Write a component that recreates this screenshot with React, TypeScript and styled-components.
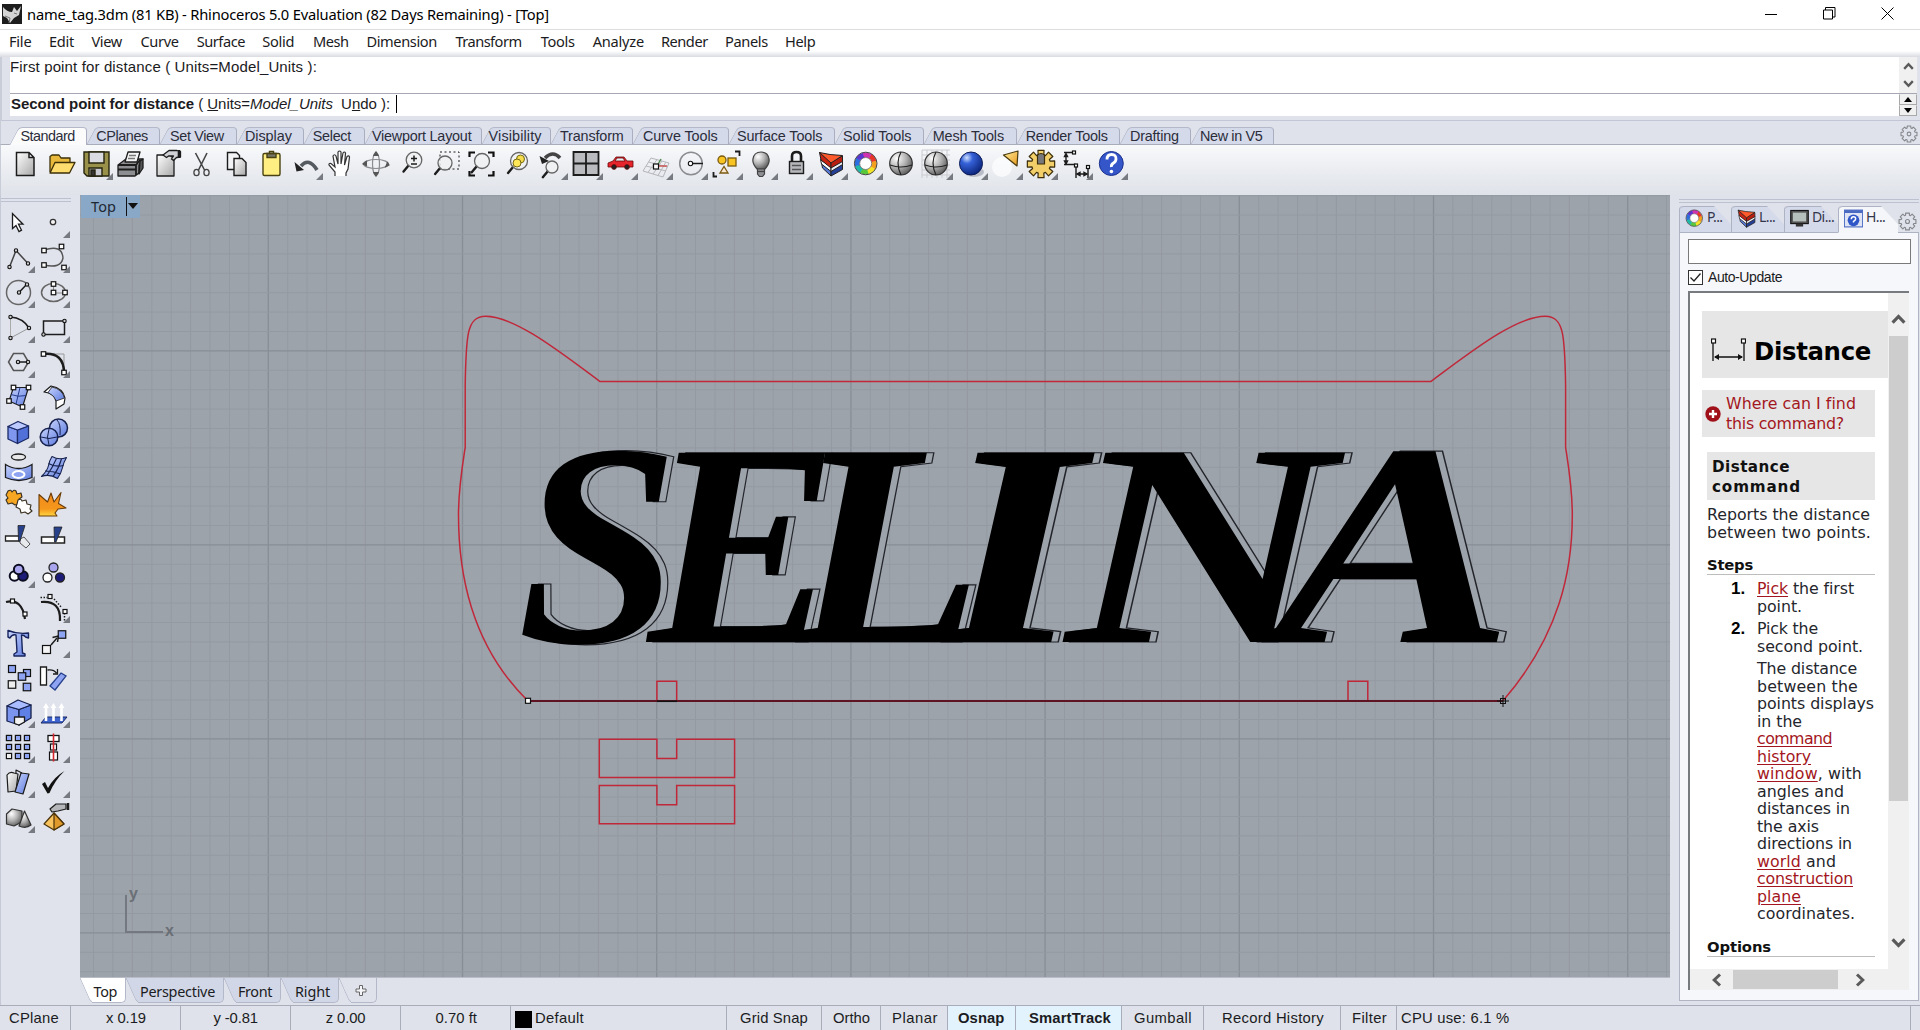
import React, { ReactNode, useLayoutEffect, useRef, useState } from "react";
import styled, { createGlobalStyle, css } from "styled-components";

const SANS = '"Liberation Sans", Arial, sans-serif';
const UI = '"Noto Sans", "Open Sans", sans-serif';
const DOC = '"DejaVu Sans", Verdana, sans-serif';

const Global = createGlobalStyle`
  * { box-sizing: border-box; }
  body { margin: 0; background: #dfe2ea; overflow: hidden; }
`;

/* ---------- text that is tracked to a fixed measure ---------- */

const Tracked = styled.span`
  display: inline-block;
  white-space: pre;
`;

function Fit({ w, children }: { w: number; children: ReactNode }) {
  const ref = useRef<HTMLSpanElement>(null);
  const [spacing, setSpacing] = useState(0);
  useLayoutEffect(() => {
    const el = ref.current;
    if (!el) return;
    const count = (el.textContent || "").length;
    setSpacing((w - el.getBoundingClientRect().width) / count);
  }, [w]);
  return (
    <Tracked ref={ref} style={{ letterSpacing: `${spacing}px` }}>
      {children}
    </Tracked>
  );
}

/* ---------- frame ---------- */

const Window = styled.div`
  display: flex;
  flex-direction: column;
  width: 1920px;
  height: 1030px;
  background: #dfe2ea;
  color: #1b1b22;
  font-family: ${SANS};
  overflow: hidden;
`;

const TitleBar = styled.header`
  display: flex;
  align-items: center;
  flex: none;
  height: 29px;
  padding: 0 3px 2px 2px;
  background: #fff;
  color: #000;
  font: 14.7px ${UI};
`;

const AppIcon = styled.svg`
  width: 20px;
  height: 20px;
  margin-right: 5px;
`;

const Caption = styled.div`
  display: flex;
  margin-left: auto;
`;

const CaptionButton = styled.div`
  display: grid;
  place-items: center;
  width: 58.5px;
  height: 26px;
`;

const MenuBar = styled.nav`
  display: flex;
  flex: none;
  height: 28px;
  border-top: 1px solid #dcdde0;
  background: linear-gradient(#fff 21px, #d9dbe1 27px);
  font: 14.6px/22px ${UI};
`;

const MenuItem = styled.span<{ $before: number }>`
  margin-left: ${(p) => p.$before}px;
`;

const CommandArea = styled.section`
  display: flex;
  flex: none;
  height: 64px;
  padding: 0 3px 4px 8px;
  border-left: 2px solid #c9cdd8;
  border-bottom: 1px solid #c2c6d6;
  background: #dfe2ea;
`;

const CommandText = styled.div`
  flex: 1;
  background: #fff;
  font-size: 15px;
`;

const History = styled.div`
  height: 37px;
  padding-top: 1px;
  border-bottom: 1px solid #a6a8b4;
  line-height: 18px;
`;

const Prompt = styled.div`
  display: flex;
  align-items: center;
  height: 19px;
  padding-left: 1px;
`;

const Caret = styled.i`
  width: 1px;
  height: 18px;
  margin-left: 6px;
  background: #000;
`;

const CommandScroll = styled.div`
  display: flex;
  flex-direction: column;
  width: 18px;
  background: #f0f0f0;
`;

const ScrollArrows = styled.div`
  display: flex;
  flex-direction: column;
  align-items: center;
  justify-content: space-around;
  height: 37px;
  padding: 1px 0;
  border-bottom: 1px solid #a6a8b4;
`;

const SpinButton = styled.div`
  display: grid;
  place-items: center;
  height: 11px;
  border: 1px solid #a9a9a9;
  border-top-color: #eee;
`;

const TabStrip = styled.div`
  display: flex;
  align-items: flex-end;
  flex: none;
  height: 24px;
  padding-left: 9px;
  border-bottom: 1px solid #a9acb9;
  border-left: 1px solid #c9cdd8;
  background: #dfe2ea;
`;

const ToolTab = styled.div<{ $w: number; $pad: number; $on?: boolean }>`
  position: relative;
  z-index: 0;
  flex: none;
  width: ${(p) => p.$w}px;
  height: ${(p) => (p.$on ? 18 : 17)}px;
  margin-bottom: ${(p) => (p.$on ? -1 : 0)}px;
  padding-left: ${(p) => p.$pad}px;
  font-size: 14.4px;
  line-height: 19px;
  color: #2b2d3a;
  &::before,
  &::after {
    content: "";
    position: absolute;
    z-index: -1;
    top: 0;
    bottom: 0;
    background: ${(p) => (p.$on ? "#fbfbfc" : "#d5daea")};
    border-top: 1px solid #b4b9ca;
  }
  &::before {
    left: 4px;
    width: 20px;
    border-left: 1px solid #b4b9ca;
    border-radius: 4px 0 0 0;
    transform: skewX(-28deg);
  }
  &::after {
    left: 14px;
    right: 0;
    border-right: 1px solid #a9aec0;
    border-radius: 0 4px 0 0;
  }
`;

const StripGear = styled.div`
  margin: 0 2px 0 auto;
  height: 19px;
`;

const ToolBar = styled.div`
  display: flex;
  flex: none;
  height: 50px;
  padding: 2px 0 0 7px;
  border-left: 1px solid #c9cdd8;
  background: linear-gradient(#f8f9fb, #eceef2 45%, #dfe2e9);
`;

const Cell = styled.div<{ $more?: boolean }>`
  position: relative;
  width: 35px;
  height: 35px;
  & > svg {
    display: block;
    width: 35px;
    height: 35px;
    overflow: visible;
  }
  ${(p) =>
    p.$more &&
    css`
      &::after {
        content: "";
        position: absolute;
        right: 0;
        bottom: 2px;
        border-style: solid;
        border-width: 0 0 7px 7px;
        border-color: transparent transparent #777a80 transparent;
      }
    `}
`;

const Main = styled.main`
  display: flex;
  flex: 1;
  min-height: 0;
`;

const SideTools = styled.aside`
  flex: none;
  width: 80px;
  padding-top: 3px;
  border-left: 1px solid #c6cad6;
  background: #e0e3ec;
`;

const Grip = styled.div<{ $w?: number }>`
  flex: none;
  width: ${(p) => (p.$w ? `${p.$w}px` : "auto")};
  height: 4px;
  border: solid #bcc1cf;
  border-width: 1px 0;
`;

const SideGrid = styled.div`
  display: grid;
  grid-template-columns: 35px 35px;
  grid-auto-rows: 35px;
  margin: 3px 0 0 -1px;
`;

const Center = styled.div`
  flex: none;
  width: 1590px;
`;

const Canvas = styled.div`
  position: relative;
  height: 783px;
  background: #9da3ab;
  border-bottom: 1px solid #b9bcc6;
  & > svg {
    display: block;
  }
`;

const ViewTitle = styled.div`
  position: absolute;
  display: flex;
  align-items: center;
  top: 0;
  left: 1px;
  width: 59px;
  height: 23px;
  padding: 0 0 1px 10px;
  background: #89a7c6;
  color: #1d2733;
  font: 14.5px ${UI};
`;

const ViewDivider = styled.i`
  width: 1px;
  height: 19px;
  margin: 0 1px 0 10px;
  background: #111;
`;

const ViewTabs = styled.div`
  display: flex;
  height: 27px;
  padding-bottom: 1px;
`;

const ViewTab = styled.div<{ $w: number; $pad: number; $on?: boolean; $bare?: boolean }>`
  position: relative;
  z-index: 0;
  width: ${(p) => p.$w}px;
  height: 25px;
  padding-left: ${(p) => p.$pad}px;
  font: 14.4px/27px ${UI};
  &::before,
  &::after {
    content: "";
    position: absolute;
    z-index: -1;
    top: 0;
    bottom: 0;
    background: ${(p) => (p.$on ? "#fff" : p.$bare ? "#dfe2ea" : "#d2d7e8")};
    border-bottom: 1px solid #b4b9ca;
  }
  &::before {
    left: 5px;
    width: 16px;
    border-left: 1px solid #b4b9ca;
    border-radius: 0 0 0 5px;
    transform: skewX(24deg);
  }
  &::after {
    left: 12px;
    right: 0;
    border-right: 1px solid #b4b9ca;
    border-radius: 0 0 5px 0;
  }
`;

/* ---------- help panel ---------- */

const Dock = styled.aside`
  display: flex;
  flex-direction: column;
  flex: 1;
  min-width: 0;
  padding: 4px 1px 4px 9px;
`;

const DockTabs = styled.div`
  display: flex;
  flex: none;
  height: 30px;
  padding-top: 3px;
`;

const DockTab = styled.div<{ $w: number; $on?: boolean }>`
  position: relative;
  z-index: 0;
  display: flex;
  gap: 3px;
  flex: none;
  width: ${(p) => p.$w}px;
  height: 27px;
  padding: 0 0 0 5px;
  font: 14px/22px ${UI};
  letter-spacing: -0.6px;
  color: #33364a;
  border-left: 1px solid #aeb3c4;
  border-bottom: 1px solid ${(p) => (p.$on ? "#f5f6fa" : "#aeb3c4")};
  border-radius: 4px 0 0 0;
  &::before {
    content: "";
    position: absolute;
    z-index: -1;
    inset: 0;
    background: ${(p) => (p.$on ? "#f5f6fa" : "#d5daea")};
    border-top: 1px solid #aeb3c4;
    border-radius: 4px 0 0 0;
    clip-path: polygon(0 0, calc(100% - 17px) 0, 100% 70%, 100% 100%, 0 100%);
  }
  & > svg {
    flex: none;
    margin-top: 3px;
  }
`;

const DockGear = styled.div`
  flex: 1;
  padding: 6px 0 0 0;
  border-bottom: 1px solid #aeb3c4;
`;

const DockBody = styled.div`
  display: flex;
  flex-direction: column;
  flex: 1;
  min-height: 0;
  padding: 6px 7px 10px 8px;
  border: 1px solid #b0b4c3;
  border-top: 0;
  background: #f6f7fa;
`;

const SearchBox = styled.div`
  flex: none;
  height: 25px;
  border: 1px solid #7a7a7a;
  background: #fff;
`;

const CheckRow = styled.div`
  display: flex;
  align-items: center;
  flex: none;
  gap: 5px;
  height: 16px;
  margin: 5px 0 6px;
  font-size: 14px;
`;

const CheckBox = styled.span`
  display: grid;
  place-items: center;
  width: 15px;
  height: 15px;
  border: 1px solid #333;
  background: #fff;
`;

const Browser = styled.div`
  display: grid;
  grid-template: 1fr 21px / 1fr 21px;
  flex: 1;
  min-height: 0;
  margin-right: 2px;
  border: solid #777b80;
  border-width: 2px 0 0 2px;
  background: #f0f0f0;
`;

const Doc = styled.article`
  overflow: hidden;
  padding: 18px 0 0 12px;
  background: #fff;
  color: #24262c;
  font: 15.8px/17.5px ${DOC};
`;

const DocTitle = styled.h1`
  display: flex;
  align-items: flex-end;
  height: 67px;
  margin: 0 0 12px;
  padding: 0 0 9px 9px;
  background: #e6e6e6;
  color: #000;
  font: bold 24.4px/34px ${DOC};
  & > svg {
    margin: 0 8px 7px 0;
  }
`;

const WhereBox = styled.div`
  display: flex;
  align-items: center;
  gap: 5px;
  width: 173px;
  height: 47px;
  margin-bottom: 15px;
  padding-left: 3px;
  background: #e6e6e6;
  color: #a31621;
  line-height: 20px;
`;

const CommandBox = styled.h2`
  width: 168px;
  height: 48px;
  margin: 0 0 6px 5px;
  padding: 5px 0 0 5px;
  background: #e6e6e6;
  color: #111;
  font: bold 15.2px/20px ${DOC};
`;

const Para = styled.p`
  margin: 0 0 0 5px;
`;

const Heading = styled.h3`
  width: 168px;
  height: 20px;
  margin: 14px 0 5px 5px;
  border-bottom: 1px solid #bdbdbd;
  color: #111;
  font: bold 14.8px/19px ${DOC};
`;

const Step = styled.div`
  display: flex;
  margin-bottom: 5px;
`;

const StepNo = styled.b`
  width: 26px;
  margin-left: 29px;
  color: #000;
  font: bold 17px/17px ${SANS};
`;

const StepNote = styled.div`
  margin: 0 0 14px 55px;
`;

const Link = styled.span`
  color: #a31621;
  text-decoration: underline;
  text-underline-offset: 2px;
`;

const VScroll = styled.div`
  display: flex;
  flex-direction: column;
  align-items: center;
  padding-top: 19px;
`;

const VThumb = styled.div`
  width: 19px;
  height: 465px;
  margin: 9px 0 134px;
  background: #cdcdcd;
`;

const HScroll = styled.div`
  display: flex;
  align-items: center;
  padding-left: 20px;
`;

const HThumb = styled.div`
  width: 105px;
  height: 19px;
  margin: 0 15px 0 9px;
  background: #cdcdcd;
`;

/* ---------- status bar ---------- */

const StatusBar = styled.footer`
  display: flex;
  flex: none;
  height: 25px;
  border-top: 1px solid #a9acb9;
  font-size: 14.8px;
  line-height: 25px;
`;

const Pane = styled.div<{ $w: number; $pad: number; $on?: boolean }>`
  display: flex;
  flex: none;
  width: ${(p) => p.$w}px;
  padding-left: ${(p) => p.$pad}px;
  border-right: 1px solid #a9acb9;
  ${(p) => p.$on && "background: #e3f3fd; font-weight: bold;"}
`;

const Swatch = styled.i`
  width: 17px;
  height: 17px;
  margin: 5px 3px 0 0;
  background: #000;
`;

/* ---------- icons ---------- */

const K = "#1c1c1c";
const B = "#8ea4f2";

const Sq = ({ x, y, s = 4.5, f = "#fff" }: { x: number; y: number; s?: number; f?: string }) => (
  <rect x={x - s / 2} y={y - s / 2} width={s} height={s} fill={f} stroke="#111" strokeWidth="1.2" />
);

const Dot = ({ x, y, r = 1.7, f = "#ccc" }: { x: number; y: number; r?: number; f?: string }) => (
  <circle cx={x} cy={y} r={r} fill={f} stroke="#111" strokeWidth="1.1" />
);

/* Outline of an eight-toothed cog. */
const cog = (cx: number, cy: number, outer: number, inner: number) => {
  const pts: string[] = [];
  for (let i = 0; i < 8; i++) {
    [
      [-0.3, inner],
      [-0.22, outer],
      [0.22, outer],
      [0.3, inner],
    ].forEach(([da, r]) => {
      const a = (i * Math.PI) / 4 + da;
      pts.push(`${(cx + r * Math.cos(a)).toFixed(2)} ${(cy + r * Math.sin(a)).toFixed(2)}`);
    });
  }
  return `M${pts.join("L")}Z`;
};

const Gear = ({ size = 22 }: { size?: number }) => (
  <svg width={size} height={size} viewBox="0 0 22 22" fill="none" stroke="#85878c" strokeWidth="1.3">
    <path d={cog(11, 11, 10, 7.6)} strokeLinejoin="round" />
    <circle cx="11" cy="11" r="2.3" />
  </svg>
);

const Chevron = ({ dir, size = 14 }: { dir: 0 | 90 | 180 | 270; size?: number }) => (
  <svg width={size} height={size} viewBox="0 0 14 14">
    <path d="M1.5 10 7 4.2 12.5 10" transform={`rotate(${dir} 7 7)`} fill="none" stroke="#5a5a5a" strokeWidth="3" />
  </svg>
);

const Lens = ({ x = 21, y = 14, r = 7.5 }: { x?: number; y?: number; r?: number }) => (
  <g>
    <path d={`M${x - r * 0.7} ${y + r * 0.7} l-5 6`} stroke={K} strokeWidth="2.4" strokeLinecap="round" />
    <circle cx={x} cy={y} r={r} fill="#f0f1f3" fillOpacity=".8" stroke="#666" strokeWidth="1.3" />
  </g>
);

const WheelGlyph = () => (
  <g fill="none" strokeWidth="5">
    {["#e8362c", "#f2a01e", "#f4e428", "#58c83a", "#20b8a8", "#2d6fe0", "#5b35d0", "#d033b0"].map((c, i) => {
      const a = ((i * 45 - 60) * Math.PI) / 180;
      const b = ((i * 45 - 12) * Math.PI) / 180;
      return (
        <path
          key={c}
          stroke={c}
          d={`M${17.7 + 8.5 * Math.cos(a)} ${16.5 + 8.5 * Math.sin(a)}A8.5 8.5 0 0 1 ${17.7 + 8.5 * Math.cos(b)} ${16.5 + 8.5 * Math.sin(b)}`}
        />
      );
    })}
    <circle cx="17.7" cy="16.5" r="11.3" stroke="#444" strokeWidth="1" />
    <circle cx="17.7" cy="16.5" r="6" stroke="#666" strokeWidth=".8" fill="#fff" />
  </g>
);

const LayersGlyph = () => (
  <g stroke="#222" strokeWidth="1" strokeLinejoin="round">
    <path d="M8.500 16 18 23.500V29L9.500 21z" fill="#5878d8" />
    <path d="M18 23.500 29.500 17v5.500L18 29z" fill="#243f96" />
    <path d="M7.500 12.500 18 20v4.500L8.500 17z" fill="#fff" />
    <path d="M18 20 29.500 13.500v4L18 24.500z" fill="#eceef4" />
    <path d="M6.500 5.500 18 15v6L8 13z" fill="#c92413" />
    <path d="M18 15 29.500 9v5.500L18 21z" fill="#b81e10" />
    <path d="M6.500 5.500 17 7.500 29.500 8.500 18 16z" fill="#ff5a2c" />
  </g>
);

const Sphere = ({ fill }: { fill: string }) => (
  <g>
    <ellipse cx="18" cy="16.5" rx="11.3" ry="11.5" fill={fill} stroke="#333" strokeWidth="1.2" />
    <path d="M7 18q11 4 22 0M18 5q-6 11 0 23" fill="none" stroke="#222" strokeWidth="1.2" />
  </g>
);

const Gradients = styled.svg`
  position: absolute;
  width: 0;
  height: 0;
`;

const Defs = () => (
  <Gradients>
    <defs>
      <radialGradient id="gGrey" cx=".32" cy=".28" r=".8">
        <stop offset="0" stopColor="#fff" />
        <stop offset=".5" stopColor="#b4b4b4" />
        <stop offset="1" stopColor="#555" />
      </radialGradient>
      <radialGradient id="gBlue" cx=".32" cy=".25" r=".85">
        <stop offset="0" stopColor="#cfe0ff" />
        <stop offset=".3" stopColor="#3562d8" />
        <stop offset="1" stopColor="#071d70" />
      </radialGradient>
      <linearGradient id="gPale" x1="0" y1="0" x2="1" y2="1">
        <stop offset="0" stopColor="#c7d3fc" />
        <stop offset="1" stopColor="#5e7ce0" />
      </linearGradient>
      <linearGradient id="gSilver" x1="0" y1="0" x2="1" y2="1">
        <stop offset="0" stopColor="#fff" />
        <stop offset="1" stopColor="#a8a8a8" />
      </linearGradient>
      <linearGradient id="gGold" x1="0" y1="0" x2="1" y2="1">
        <stop offset="0" stopColor="#fff0a0" />
        <stop offset="1" stopColor="#e8961a" />
      </linearGradient>
      <linearGradient id="gFlame" x1="0" y1="0" x2="0" y2="1">
        <stop offset="0" stopColor="#f08a1c" />
        <stop offset=".7" stopColor="#f5971c" />
        <stop offset="1" stopColor="#ffd640" />
      </linearGradient>
    </defs>
  </Gradients>
);

type IconDef = [ReactNode, boolean?];

const topIcons: IconDef[] = [
  [<path d="M8.5 5.5H21l5 5v18H8.5zM21 5.5v5h5" fill="url(#gSilver)" stroke={K} strokeWidth="1.5" />],
  [
    <g stroke="#3c3008" strokeWidth="1.3" strokeLinejoin="round">
      <path d="M7 25V9.5L9 8h7l2 3h9v5" fill="#e9b93c" />
      <path d="M7 26 12 15.5h20L26.5 26z" fill="#ffdc6e" />
    </g>,
  ],
  [
    <g stroke="#26240e" strokeWidth="1.4">
      <path d="M6 5h25v24H9l-3-3z" fill="#99904a" />
      <path d="M11 5h15v11H11z" fill="#d9dbe0" />
      <path d="M11 21h13v8H11z" fill="#c9cbd0" />
      <path d="M13 23h4v6h-4z" fill="#333" />
    </g>,
    true,
  ],
  [
    <g stroke={K} strokeWidth="1.3" strokeLinejoin="round">
      <path d="M5 18 13 12h17l-4 6v8L22 29H5z" fill="#8c8e92" />
      <path d="M12 15 15 5h12l-3 10z" fill="#f4f4f6" />
      <path d="M5 18h18l4-5M23 18v10M5 22.5h18" fill="none" strokeWidth="1.8" />
      <path d="M16 8.5h7M15 11.5h7" stroke="#777" />
      <path d="M27 14l3-2v9l-4 6z" fill="#555" />
    </g>,
  ],
  [
    <g stroke={K} strokeWidth="1.3" strokeLinejoin="round">
      <path d="M9 8h13l4 4v17H9z" fill="url(#gSilver)" />
      <path d="M15 8 21 3.5h8l3.5 1V10l-4 .5-3 3-2-1.5 2-3h-5l-2 1.5z" fill="#cfd1d4" />
      <path d="M31 3v8" strokeWidth="2.6" />
    </g>,
  ],
  [
    <g fill="none" stroke="#444" strokeWidth="1.3">
      <path d="M12.500 6 21.500 23M24 6 15.500 23" strokeWidth="1.600" />
      <ellipse cx="13.500" cy="25.500" rx="2.600" ry="3.200" />
      <ellipse cx="23.500" cy="25.500" rx="2.600" ry="3.200" />
    </g>,
  ],
  [
    <g fill="#f3f4f6" stroke={K} strokeWidth="1.4">
      <path d="M9.5 5.5h9l3 3v14h-12z" />
      <path d="M16 11.5h8l4 4v13H16z" fill="url(#gSilver)" />
    </g>,
  ],
  [
    <g stroke="#4a4210" strokeWidth="1.4">
      <rect x="10" y="6.5" width="17" height="22" rx="1.5" fill="#ffee82" />
      <path d="M14 6.5h9v4h-9z" fill="#77766a" />
      <path d="M16.5 4.5h4v2h-4z" fill="#bbb" />
    </g>,
  ],
  [
    <g>
      <path d="M13 19q8-9 16 4" fill="none" stroke="#555a60" strokeWidth="3.6" />
      <path d="M6.5 15l2 9.5L16 23z" fill="#222" />
    </g>,
    true,
  ],
  [
    <path
      d="M12 29v-4L6 18q-.5-2 2-1.5l4 3.5-2-11q1.5-2.500 3 0l2 8V5q1.500-2 3 0v12l2-11q1.500-2 2.500 0l-1 12 2.500-8.500q2-1.500 2.500.5L25 22l-2 4v3"
      fill="#fff"
      stroke="#333"
      strokeWidth="1.200"
    />,
  ],
  [
    <g fill="none" stroke="#8a8c90" strokeWidth="1.200">
      <ellipse cx="18" cy="17" rx="12.500" ry="4.500" />
      <ellipse cx="18" cy="17" rx="3.500" ry="11.500" />
      <path d="M15.500 9l2.500-4 2.500 4M27 20l4-2-2-3M15.500 25l2.500 4 2.500-4M9 14l-4 3 4 2" fill="#555" stroke="#555" />
    </g>,
  ],
  [
    <g>
      <Lens x={21} y={13} r={7.8} />
      <path d="M18 11.5h6M21 8.5v6M18 17h6" stroke={K} strokeWidth="1.5" />
    </g>,
  ],
  [
    <g>
      <rect x="12" y="5" width="19" height="17" fill="none" stroke={K} strokeDasharray="2 2.5" />
      <Lens x={17} y={16} r={7} />
    </g>,
  ],
  [
    <g>
      <path d="M6.5 10V5.5H12M25 5.5h5.5V10M30.5 24v4.5H25M12 28.5H6.5V24" fill="none" stroke="#111" strokeWidth="2.2" />
      <Lens x={19} y={14} r={7.5} />
    </g>,
  ],
  [
    <g>
      <Lens x={21} y={14} r={8.5} />
      <circle cx="22.5" cy="12" r="4" fill="#f5dc4c" stroke="#776a10" />
      <circle cx="19" cy="16" r="4" fill="#ffe75a" stroke="#776a10" />
    </g>,
  ],
  [
    <g>
      <path d="M12 11q8-8 15 0" fill="none" stroke="#444" strokeWidth="3.5" />
      <path d="M6.5 9l2.5 8 7-3z" fill="#222" />
      <Lens x={19} y={20} r={6} />
    </g>,
    true,
  ],
  [<path d="M5.5 5h25v23h-25zM18 5v23M5.5 16.5h25" fill="#b9bbbf" stroke={K} strokeWidth="1.8" />, true],
  [
    <g stroke="#6a0a0a" strokeWidth=".8">
      <path d="M5 20v-4l5-2 3-4h8l3 4h6v6z" fill="#e5242c" />
      <path d="M12 14l2-3h6l2 3z" fill="#e9eef5" />
      <circle cx="11" cy="20" r="2.4" fill="#222" />
      <circle cx="24" cy="20" r="2.4" fill="#222" />
    </g>,
    true,
  ],
  [
    <g fill="none" stroke="#b4b6ba" strokeWidth="1">
      <path d="M5 24 13 11l18 5-6 14zM8 19l20 5M10.500 15l19 5M10 25.500 19 12.500M15 27l9-13M20 28.500l8-13.500" />
      <path d="M18 19h11" stroke="#c55" strokeWidth="1.500" />
      <path d="M19 19l4-7" stroke="#585" strokeWidth="1.500" />
      <Sq x={18} y={19.5} s={5} />
    </g>,
    true,
  ],
  [
    <g>
      <circle cx="18" cy="16.5" r="11.3" fill="none" stroke="#8a8c90" strokeWidth="1.5" />
      <path d="M18 16.5h12" stroke={K} strokeWidth="1.5" />
      <Dot x={17.5} y={16.5} r={2.2} f="#fff" />
    </g>,
    true,
  ],
  [
    <g stroke="#7a5a10" strokeWidth="1.3">
      <path d="M27 4.5h4.5V9M9 29.5H5.5V25" fill="none" stroke={K} strokeWidth="1.8" />
      <circle cx="14" cy="13" r="4" fill="#f7c422" />
      <rect x="20" y="11" width="8" height="8" fill="#f7c422" />
      <path d="M12 26l4-6.5 4 6.5z" fill="#fbe6cf" />
    </g>,
    true,
  ],
  [
    <g stroke="#444" strokeWidth="1.2">
      <path d="M14 22q-5-6-4-10 1-7 8-7t8 7q1 4-4 10z" fill="url(#gGrey)" />
      <path d="M14.5 22h7v5l-2 2.5h-3l-2-2.5z" fill="#8d8f93" />
      <path d="M14.5 24.5h7" />
    </g>,
    true,
  ],
  [
    <g stroke={K} strokeWidth="1.4">
      <path d="M14 15V9q0-4 4.5-4T23 9v6" fill="none" strokeWidth="2.6" />
      <rect x="11.5" y="14.5" width="14" height="12" fill="#b5b7bb" />
      <path d="M14 18.5h9M14 22.5h9" stroke="#555" />
    </g>,
    true,
  ],
  [<LayersGlyph />, true],
  [<WheelGlyph />, true],
  [<Sphere fill="url(#gGrey)" />],
  [
    <g>
      <path d="M4 3v28M9 3v28M14 3v28M19 3v28M24 3v28M29 3v28M4 3h28M4 8h28M4 13h28M4 18h28M4 23h28M4 28h28" stroke="#c9cbd0" strokeWidth="1" />
      <Sphere fill="url(#gGrey)" />
    </g>,
    true,
  ],
  [
    <g>
      <ellipse cx="21" cy="25" rx="10" ry="5" fill="#b9bcc6" />
      <circle cx="18" cy="16.5" r="11.5" fill="url(#gBlue)" stroke="#0d1c58" />
    </g>,
    true,
  ],
  [
    <g>
      <circle cx="14" cy="20" r="10" fill="#fff" opacity=".7" />
      <path d="M15.5 8 30 4l-1 15z" fill="url(#gGold)" stroke="#4a3a10" strokeWidth="1.2" strokeLinejoin="round" />
    </g>,
    true,
  ],
  [
    <g stroke="#3c2e08" strokeWidth="1.2" strokeLinejoin="round">
      <path d={cog(18, 17, 14, 9.5)} fill="#f3cf6a" />
      <path d="M14.5 8q3.5-3 7 0v9h-7z" fill="#77787b" />
    </g>,
    true,
  ],
  [
    <g fill="none" stroke={K} strokeWidth="1.4">
      <path d="M6 5.5h10M6 17.5h12M8 7.5v9M18 20v11M30 20v11M20 27h8" />
      <path d="M6.5 9.5 8 6.5l1.5 3zM6.5 14l1.5 3 1.5-3zM22 25.5 19 27l3 1.5zM26 25.5l3 1.5-3 1.5z" fill={K} />
      <Sq x={16} y={5.5} s={3} />
      <Sq x={18} y={18.5} s={3} />
      <Sq x={30} y={20} s={3} />
    </g>,
    true,
  ],
  [
    <g>
      <circle cx="18.3" cy="16.5" r="12" fill="#3456c8" stroke="#1d3390" />
      <path d="M14 12.5q0-5 4.6-5t4.400 4.500q0 2.500-2.500 4t-2.100 4" fill="none" stroke="#fff" strokeWidth="2.8" />
      <circle cx="18.4" cy="24.5" r="1.8" fill="#fff" />
    </g>,
    true,
  ],
];

const sideIcons: IconDef[] = [
  [<path d="M12.5 8.5v15l3.5-3 3 6 2.5-1.300-3-6h4.500z" fill="#fff" stroke={K} strokeWidth="1.3" />],
  [<circle cx="18" cy="17" r="2.7" fill="#f4f4f4" stroke="#333" strokeWidth="1.3" />, true],
  [
    <g fill="none" stroke="#444" strokeWidth="1.5">
      <path d="M9.5 27 16 10.5 28 23.5" />
      <Dot x={9.5} y={27} />
      <Dot x={16} y={10.5} />
      <Dot x={28} y={23.5} />
    </g>,
    true,
  ],
  [
    <g>
      <path d="M9 10q18-6 19 8-2 11-19 7" fill="none" stroke="#555" strokeWidth="1.4" />
      <Sq x={9} y={10.5} />
      <Sq x={26.5} y={6.5} />
      <Sq x={9} y={25} />
      <Sq x={29} y={27.5} />
    </g>,
    true,
  ],
  [
    <g>
      <circle cx="18.5" cy="17.5" r="12" fill="none" stroke="#666" strokeWidth="1.5" />
      <path d="M19 17.5 27 9" stroke={K} strokeWidth="1.5" />
      <Dot x={19} y={17.5} />
      <Dot x={27} y={9.5} />
    </g>,
    true,
  ],
  [
    <g>
      <ellipse cx="18.5" cy="17.5" rx="12" ry="9" fill="none" stroke="#666" strokeWidth="1.5" />
      <path d="M18.5 9v9H30" fill="none" stroke="#888" />
      <Sq x={18.5} y={9} />
      <Sq x={18.5} y={17.5} />
      <Sq x={30} y={17.5} />
    </g>,
    true,
  ],
  [
    <g>
      <path d="M10.5 28V7" fill="none" stroke="#aaa" />
      <path d="M10.5 28 29 18" stroke="#999" />
      <path d="M10.5 7Q23 8 29 18" fill="none" stroke={K} strokeWidth="1.7" />
      <Dot x={10.5} y={7} />
      <Dot x={29} y={18} />
      <Dot x={10.5} y={28} />
    </g>,
    true,
  ],
  [
    <g>
      <rect x="8.5" y="11" width="21" height="13.5" fill="none" stroke={K} strokeWidth="1.5" />
      <Dot x={29.5} y={11} />
      <Dot x={8.5} y={24.5} />
    </g>,
    true,
  ],
  [
    <g>
      <path d="M13.5 8.5h10L28.5 17l-5 8.5h-10L8.5 17z" fill="none" stroke="#555" strokeWidth="1.5" />
      <path d="M18 17h10" stroke={K} strokeWidth="1.5" />
      <Dot x={18} y={17} />
      <Dot x={28} y={17} />
    </g>,
    true,
  ],
  [
    <g>
      <path d="M8.5 9h20.5v19" fill="none" stroke="#999" />
      <path d="M8.5 9Q29 7 29 28" fill="none" stroke={K} strokeWidth="2.5" />
      <Sq x={8.5} y={9} />
      <Sq x={29} y={27.5} />
    </g>,
    true,
  ],
  [
    <g>
      <path d="M13.5 7.5h15L22.5 27 9 21z" fill="url(#gPale)" stroke={K} strokeWidth="1.2" />
      <path d="M20 7.5 16 24M11 14.5q7 3 15 1" fill="none" stroke="#223a8c" />
      <Sq x={13.5} y={7.5} />
      <Sq x={28.5} y={7.5} />
      <Sq x={22.5} y={27} />
      <Sq x={9} y={21} />
    </g>,
    true,
  ],
  [
    <g stroke={K} strokeWidth="1.2" strokeLinejoin="round">
      <path d="M9 12 16 6q12 2 14 12l-1 6-8 5V21q-1-8-12-9z" fill="#fff" />
      <path d="M17 7q10 2 12.5 11L21 21q-1-5-8-8.500z" fill="url(#gPale)" strokeWidth=".8" />
    </g>,
    true,
  ],
  [
    <g stroke="#1b2a66" strokeWidth="1.3" strokeLinejoin="round">
      <path d="M8 11.5 17.5 15v13.5L8 24z" fill="#7f97ee" />
      <path d="M17.5 15 28.5 11v12l-11 5.500z" fill="#5271d8" />
      <path d="M8 11.5 18 6.5 28.5 11l-11 4z" fill="#bccaff" />
    </g>,
    true,
  ],
  [
    <g stroke="#15204c" strokeWidth="1.5" fill="url(#gPale)">
      <circle cx="23.5" cy="13" r="9" />
      <circle cx="14" cy="22" r="8.8" />
      <path d="M6 22q8 3 16 0M14 14q-3 8 0 16M22 5q4 4 3 15" fill="none" strokeWidth="1" />
    </g>,
    true,
  ],
  [
    <g stroke={K} strokeWidth="1.3">
      <ellipse cx="18.5" cy="7" rx="7" ry="3" fill="#e8e8ea" />
      <path d="M5.5 14.5q13 8 26.5 0v13q-13 6-26.500 0z" fill="url(#gPale)" />
      <ellipse cx="18.5" cy="24.5" rx="6" ry="3.5" fill="#8ea4f2" stroke="#fff" strokeWidth="2" />
    </g>,
    true,
  ],
  [
    <g stroke="#15204c" strokeWidth="1.1" strokeLinejoin="round">
      <path d="M17 6.500q7 4 14.500 1-3 5-4 10t-5 11q-8-5-16-2 6-6 7-11t3.500-9z" fill="url(#gPale)" />
      <path d="M13.500 13.500q7 4 15 2M10 21q8 0 15.500 3M21.500 8.500q-4 9-9.500 17M26.500 9q-3 10-8.500 17.500" fill="none" />
    </g>,
    true,
  ],
  [
    <g stroke="#3a3020" strokeWidth="1.1" strokeLinejoin="round">
      <path d="M8 6q3-2 4 1 2-3 4-1l1 3 4-1 1 4-3 2 1 4-5 2-3-2-4 1-2-4 2-2-2-3z" fill="#f5a623" />
      <path d="M18 15q3-2 4 1l4-1 1 4 4 1-1 4 2 2-4 3-3-2-4 1-1-4-4-2 1-3z" fill="#fff" />
    </g>,
  ],
  [
    <path d="M4 9.500 12.500 17 16 8l3 9L26 7.500 23.500 18.500 31 23l-8 1-3 4 2 3H4z" fill="url(#gFlame)" stroke="#6a3c08" strokeWidth="1.1" strokeLinejoin="round" />,
  ],
  [
    <g stroke="#222" strokeWidth="1.3">
      <path d="M5.5 16h14v5h-14z" fill="#fff" />
      <path d="M20 19l4-2 6 7-4 4-6-5z" fill="#e8e9ec" strokeWidth="1" stroke="#555" />
      <path d="M18 5.5h7L20 21h-1.500z" fill="#26408c" strokeWidth=".8" />
    </g>,
  ],
  [
    <g stroke="#222" strokeWidth="1.5">
      <path d="M6.5 17h23v6h-23z" fill="#fff" />
      <path d="M19 7h8l-6 15h-1.500z" fill="#26408c" strokeWidth=".8" />
    </g>,
  ],
  [
    <g stroke="#0c0c20" strokeWidth="2">
      <circle cx="14.5" cy="21" r="4.8" fill="#fff" />
      <circle cx="23" cy="21" r="4.8" fill="#1c1c78" />
      <circle cx="18.7" cy="14.5" r="4.8" fill="#a8a4ee" />
    </g>,
    true,
  ],
  [
    <g stroke="#222" strokeWidth="1.3">
      <circle cx="18.5" cy="12.5" r="4.5" fill="#a8a4ee" />
      <circle cx="12.5" cy="22.5" r="4.5" fill="#fff" />
      <circle cx="25" cy="22.5" r="4.5" fill="#1c1c78" />
    </g>,
  ],
  [
    <g>
      <path d="M6 12q16-4 19 17" fill="none" stroke={K} strokeWidth="2.2" />
      <Sq x={12.5} y={11} s={4} />
      <Sq x={25} y={24} s={4} />
    </g>,
  ],
  [
    <g>
      <path d="M5.5 7.5h7M19 9l8 9M29.5 23v8" stroke={K} strokeWidth="1.5" strokeDasharray="1.5 1.5" />
      <path d="M6 12q20-2 19 19" fill="none" stroke={K} strokeWidth="2.2" />
      <Sq x={15} y={6.5} s={4} />
      <Sq x={30} y={21.5} s={4} />
    </g>,
    true,
  ],
  [
    <path d="M8 5.5q10 4 20.5 2.500v5l-3-1q-1-2-4-2l1 18 2.500 1v2h-11v-2l3-2-1-17q-4-1-6 3l-2-1z" fill="url(#gPale)" stroke="#17245c" strokeWidth="1.4" strokeLinejoin="round" />,
  ],
  [
    <g>
      <path d="M16 20l6-7" stroke={K} strokeWidth="1.5" />
      <path d="M17.5 12.5 23.5 11l-1 6" fill="none" stroke={K} strokeWidth="1.5" />
      <Sq x={11.5} y={24.5} s={8} f="#f4f4f6" />
      <Sq x={27} y={9.5} s={7.5} f={B} />
    </g>,
    true,
  ],
  [
    <g>
      <Sq x={12} y={9} s={7} f={B} />
      <Sq x={27} y={13} s={7} f={B} />
      <Sq x={22} y={16.5} s={7.5} f={B} />
      <Sq x={12} y={24.5} s={7.5} f="#eee" />
      <Sq x={27} y={27} s={7.5} f={B} />
    </g>,
  ],
  [
    <g stroke={K} strokeWidth="1.3">
      <path d="M5.5 7h6v18h-6z" fill="#fff" />
      <path d="M12.5 10q6-1 9 3M18 14l4.5 0 0-5" fill="none" />
      <path d="M26 13l5 3-11 14-5-4z" fill={B} stroke="#26408c" />
    </g>,
  ],
  [
    <g stroke="#15204c" strokeWidth="1.3" strokeLinejoin="round">
      <path d="M7 11 19 14.500V30L7 26z" fill="#7b95ee" />
      <path d="M19 14.500 31 10v13L19 30z" fill="#5f80e4" />
      <path d="M7 11 18 5 31 10 19 14.500z" fill="#a9bcff" />
      <path d="M14.500 22h10v5l-5.500 3-4.500-1.500z" fill="#f2f2f4" stroke={K} />
    </g>,
    true,
  ],
  [
    <g>
      <path d="M6 28 11 22h21l-5 6z" fill="#3f63cc" stroke="#1b2a66" />
      <path d="M11 26V12M18.5 26V12M26.5 26V12" stroke="#fff" strokeWidth="2.6" />
      <path d="M8 13l3-5 3 5zM15.5 13l3-5 3 5zM23.5 13l3-5 3 5z" fill="#fff" />
    </g>,
    true,
  ],
  [
    <g>
      {[8, 17, 26].map((y) => [9, 18, 27].map((x) => <Sq key={`${x}-${y}`} x={x} y={y} s={5.2} f={x === 9 && y === 26 ? "#eee" : B} />))}
    </g>,
    true,
  ],
  [
    <g>
      <Sq x={18.5} y={26} s={8} />
      <rect x="13" y="5.5" width="11" height="6" fill="#fff" stroke="#111" strokeWidth="1.3" />
      <Sq x={18.5} y={17} s={6} />
      <path d="M18.5 3.5v28" stroke="#d4242c" strokeWidth="1.6" />
    </g>,
    true,
  ],
  [
    <g stroke={K} strokeWidth="1.2" strokeLinejoin="round">
      <path d="M7 10q3-4 7-2l4 1-2 17-8 1z" fill="url(#gSilver)" />
      <path d="M21 8l8 1-6 20-8-2z" fill="url(#gPale)" />
      <path d="M16 8V5l6 3" fill="none" />
    </g>,
    true,
  ],
  [<path d="M7 19l3-2 3 6Q19 12 29.5 6 20 15 14.5 28l-2 .5z" fill="#111" />, true],
  [
    <g stroke="#333" strokeWidth="1.2" strokeLinejoin="round">
      <path d="M6.5 14 12 9l10 2v11l-8 4-7.5-2z" fill="url(#gGrey)" />
      <path d="M24.5 11 31 25q-5 4-12 1z" fill="url(#gGrey)" />
    </g>,
    true,
  ],
  [
    <g stroke="#4a3208" strokeWidth="1.2" strokeLinejoin="round">
      <path d="M19 13 29 24l-10 6-10-6z" fill="#f8c35c" />
      <path d="M19 13 29 24l-10 6z" fill="#e09a2c" />
      <path d="M15 9 21 4h10v5l-8 2-6 1z" fill="#b4b6ba" stroke={K} />
      <path d="M33 3v7" stroke={K} strokeWidth="2.5" />
    </g>,
    true,
  ],
];

/* ---------- data ---------- */

/* [label, start, end] */
const menus: [string, number, number][] = [
  ["File", 9, 31.4],
  ["Edit", 49, 74],
  ["View", 91.4, 122],
  ["Curve", 140.4, 178.8],
  ["Surface", 196.7, 245],
  ["Solid", 262.4, 294.3],
  ["Mesh", 313, 348.6],
  ["Dimension", 366.5, 437],
  ["Transform", 455.5, 521.6],
  ["Tools", 540.8, 574.7],
  ["Analyze", 592.7, 644],
  ["Render", 661, 707.8],
  ["Panels", 725, 768],
  ["Help", 785, 815.5],
];

/* [label, tab end, text start, text end] */
const toolTabs: [string, number, number, number][] = [
  ["Standard", 87, 20.4, 74.7],
  ["CPlanes", 160, 96.3, 147.8],
  ["Set View", 237, 170, 223.7],
  ["Display", 304, 245, 291.8],
  ["Select", 364.5, 312.7, 351],
  ["Viewport Layout", 482, 372, 471.4],
  ["Visibility", 551, 488.6, 541.6],
  ["Transform", 633, 560, 623.7],
  ["Curve Tools", 728.6, 642.9, 717.6],
  ["Surface Tools", 835, 737, 822.4],
  ["Solid Tools", 924.5, 843, 911.4],
  ["Mesh Tools", 1016.7, 932.7, 1004],
  ["Render Tools", 1120, 1025.7, 1107.8],
  ["Drafting", 1191, 1130, 1178.8],
  ["New in V5", 1274, 1200, 1262.4],
];

const viewTabs: [string, number, number, number][] = [
  ["Top", 125.5, 93.5, 117],
  ["Perspective", 223.5, 140, 215],
  ["Front", 281, 238, 272],
  ["Right", 338.5, 295, 330],
];

const panes: [string, number, number, number][] = [
  ["CPlane", 71, 9, 59],
  ["x 0.19", 181, 106, 146],
  ["y -0.81", 291, 213.5, 258],
  ["z 0.00", 401, 325.7, 365.5],
  ["0.70 ft", 511, 435.5, 477],
  ["Default", 727, 515, 584],
  ["Grid Snap", 822, 740, 808],
  ["Ortho", 881, 833, 870],
  ["Planar", 948, 892, 938],
  ["Osnap", 1016, 958, 1004.5],
  ["SmartTrack", 1122, 1029, 1111],
  ["Gumball", 1204, 1134, 1192],
  ["Record History", 1341, 1222, 1324],
  ["Filter", 1397, 1352, 1387],
  ["CPU use: 6.1 %", 1911, 1401, 1509.5],
];

/* ---------- model view ---------- */

const Lettering = styled.text`
  font: italic bold 289px "Liberation Serif", "Times New Roman", serif;
`;

const AxisLabel = styled.text`
  font: bold 16px ${SANS};
  fill: #6a6f76;
`;

/* [glyph, left, advance] */
const letters: [string, number, number][] = [
  ["S", 517, 162],
  ["E", 648, 190],
  ["L", 791, 192],
  ["I", 938, 146],
  ["N", 1066, 268],
  ["A", 1274, 240],
];

function Model() {
  const lines: ReactNode[] = [];
  const rule = (d: string, i: number) => (
    <path key={d} d={d} stroke={i % 10 === 0 ? "#888e96" : "#949aa2"} strokeWidth={i % 10 === 0 ? 1.3 : 1} />
  );
  for (let i = 1; i < 83; i++) lines.push(rule(`M${(74.1 + i * 19.42).toFixed(1)} 195V978`, i));
  for (let i = 2; i < 43; i++) lines.push(rule(`M80 ${(156.9 + i * 19.4).toFixed(1)}H1670`, i));
  const bracket = (y: number) => `M599.3 ${y}H656.9V${y + 19.3}H676.7V${y}H734.6V${y + 38.3}H599.3Z`;
  return (
    <svg width="1590" height="782" viewBox="80 195 1590 782">
      {lines}
      <g fill="none" stroke="#c0283a" strokeWidth="1.5">
        <path d="M527.7 700.7C470 644 458.5 570 458.5 515C458.5 487 463 462 465.2 447.3V385C466 335 467 316.3 485.5 316.3C515 316.3 560 352 599.8 381.4H1431C1470.8 352 1515.8 316.3 1545.3 316.3C1563.8 316.3 1564.8 335 1565.6 385V447.3C1567.8 462 1572.3 487 1572.3 515C1572.3 570 1560 635 1503 700.7" />
        <path d="M656.9 701V681.2H676.7V701M1348 701V681.2H1367.8V701" />
        <path d={bracket(739.2)} />
        <path d={bracket(785.4)} />
      </g>
      <g transform="translate(7 0)" fill="#9da3ab" stroke="#23252b" strokeWidth="1.2" aria-hidden="true">
        <use href="#lettering" />
      </g>
      <Lettering id="lettering" y="642">
        {letters.map(([c, x, w]) => (
          <tspan key={c} x={x} textLength={w} lengthAdjust="spacingAndGlyphs">
            {c}
          </tspan>
        ))}
      </Lettering>
      <path d="M528 701H1503" stroke="#5e1422" strokeWidth="2" />
      <path d="M657 701.3H677" stroke="#111" strokeWidth="1.5" />
      <Sq x={528} y={700.8} s={5} />
      <g stroke="#111" fill="none">
        <path d="M1497 701h12M1503 695v12" />
        <rect x="1500.5" y="698.5" width="5" height="5" />
      </g>
      <path d="M126 895V932H163" fill="none" stroke="#747981" strokeWidth="2" />
      <AxisLabel x="129" y="899">y</AxisLabel>
      <AxisLabel x="165" y="936">x</AxisLabel>
    </svg>
  );
}

/* ---------- app ---------- */

function Icons({ list }: { list: IconDef[] }) {
  return (
    <>
      {list.map(([art, more], i) => (
        <Cell key={i} $more={more}>
          <svg viewBox="0 0 35 35" fill="none">
            {art}
          </svg>
        </Cell>
      ))}
    </>
  );
}

const Mini = ({ children }: { children: ReactNode }) => (
  <svg width="19" height="19" viewBox="5 4 26 26" fill="none">
    {children}
  </svg>
);

export default function App() {
  return (
    <Window>
      <Global />
      <Defs />
      <TitleBar>
        <AppIcon viewBox="0 0 20 20">
          <rect width="20" height="20" fill="#1d1d1d" />
          <path d="M1 3q4 5 9 5l2-5 3 4 4-5-2 9-5 3-4 5-3-5-4-2z" fill="#d4d4d4" />
          <path d="M3 12l5 2-1 5M12 9l3 1" stroke="#777" fill="none" />
        </AppIcon>
        <Fit w={522}>name_tag.3dm (81 KB) - Rhinoceros 5.0 Evaluation (82 Days Remaining) - [Top]</Fit>
        <Caption>
          <CaptionButton>
            <svg width="12" height="12" stroke="#000"><path d="M0 6.5h12" /></svg>
          </CaptionButton>
          <CaptionButton>
            <svg width="13" height="13" fill="none" stroke="#000"><path d="M.5 3h9v9h-9zM2.5 3V.5h9.5v9.5H9.5" /></svg>
          </CaptionButton>
          <CaptionButton>
            <svg width="13" height="13" stroke="#000"><path d="M.5.5l12 12M12.5.5l-12 12" /></svg>
          </CaptionButton>
        </Caption>
      </TitleBar>

      <MenuBar>
        {menus.map(([name, a, b], i) => (
          <MenuItem key={name} $before={a - (i ? menus[i - 1][2] : 0)}>
            <Fit w={b - a}>{name}</Fit>
          </MenuItem>
        ))}
      </MenuBar>

      <CommandArea>
        <CommandText>
          <History>
            <Fit w={307}>First point for distance ( Units=Model_Units ):</Fit>
          </History>
          <Prompt>
            <Fit w={379}>
              <b>Second point for distance</b> ( <u>U</u>nits=<i>Model_Units</i>  U<u>n</u>do ):
            </Fit>
            <Caret />
          </Prompt>
        </CommandText>
        <CommandScroll>
          <ScrollArrows>
            <Chevron dir={0} size={11} />
            <Chevron dir={180} size={11} />
          </ScrollArrows>
          <SpinButton>
            <svg width="8" height="5"><path d="M4 0l4 5H0z" /></svg>
          </SpinButton>
          <SpinButton>
            <svg width="8" height="5"><path d="M4 5l4-5H0z" /></svg>
          </SpinButton>
        </CommandScroll>
      </CommandArea>

      <TabStrip>
        {toolTabs.map(([name, end, a, b], i) => {
          const start = i ? toolTabs[i - 1][1] : 10;
          return (
            <ToolTab key={name} $w={end - start} $pad={a - start} $on={i === 0}>
              <Fit w={b - a}>{name}</Fit>
            </ToolTab>
          );
        })}
        <StripGear>
          <Gear size={18} />
        </StripGear>
      </TabStrip>

      <ToolBar>
        <Icons list={topIcons} />
      </ToolBar>

      <Main>
        <SideTools>
          <Grip $w={70} />
          <SideGrid>
            <Icons list={sideIcons} />
          </SideGrid>
        </SideTools>

        <Center>
          <Canvas>
            <Model />
            <ViewTitle>
              <Fit w={25}>Top</Fit>
              <ViewDivider />
              <svg width="10" height="6"><path d="M0 0h10L5 6z" fill="#111" /></svg>
            </ViewTitle>
          </Canvas>
          <ViewTabs>
            {viewTabs.map(([name, end, a, b], i) => {
              const start = i ? viewTabs[i - 1][1] : 80;
              return (
                <ViewTab key={name} $w={end - start} $pad={a - start} $on={i === 0}>
                  <Fit w={b - a}>{name}</Fit>
                </ViewTab>
              );
            })}
            <ViewTab $w={38} $pad={16} $bare>
              <svg width="13" height="13" fill="#f4f5f8" stroke="#666">
                <path d="M4.5 1.5h3v3.5h3.5v3H7.5v3.5h-3V8H1V5h3.5z" />
              </svg>
            </ViewTab>
          </ViewTabs>
        </Center>

        <Dock>
          <Grip />
          <DockTabs>
            <DockTab $w={52}>
              <Mini><WheelGlyph /></Mini>
              P...
            </DockTab>
            <DockTab $w={53}>
              <Mini><LayersGlyph /></Mini>
              L...
            </DockTab>
            <DockTab $w={54}>
              <Mini>
                <rect x="6" y="6" width="24" height="18" fill="#555" stroke="#111" strokeWidth="1.5" />
                <rect x="9" y="9" width="18" height="12" fill="#b5c0bd" />
                <path d="M13 28h10v-4H13z" fill="#333" />
              </Mini>
              Di...
            </DockTab>
            <DockTab $w={60} $on>
              <Mini>
                <rect x="5.5" y="5.5" width="25" height="23" fill="#dfe4f4" stroke="#4b6bc2" strokeWidth="1.5" />
                <path d="M5.5 5.5h25v4h-25z" fill="#4b6bc2" />
                <circle cx="18" cy="19.5" r="8" fill="#2f57c8" />
                <path d="M15 18q0-3.5 3-3.500t3 3q-.3 2-3 3.500v1.500" stroke="#fff" strokeWidth="2" />
              </Mini>
              H...
            </DockTab>
            <DockGear>
              <Gear size={19} />
            </DockGear>
          </DockTabs>
          <DockBody>
            <SearchBox />
            <CheckRow>
              <CheckBox>
                <svg width="11" height="9" fill="none" stroke="#222" strokeWidth="1.3"><path d="M.5 4.5 4 8 10.5.5" /></svg>
              </CheckBox>
              <Fit w={74}>Auto-Update</Fit>
            </CheckRow>
            <Browser>
              <Doc>
                <DocTitle>
                  <svg width="35" height="24" fill="none" stroke="#111" strokeWidth="1.3">
                    <path d="M2 4v19M33 4v19M4 19h27" />
                    <path d="M8 16 3 19l5 3zM27 16l5 3-5 3z" fill="#111" stroke="none" />
                    <Sq x={2.5} y={3} s={4} />
                    <Sq x={32.5} y={3} s={4} />
                  </svg>
                  <Fit w={117}>Distance</Fit>
                </DocTitle>
                <WhereBox>
                  <svg width="16" height="16">
                    <circle cx="8" cy="8" r="7.7" fill="#a01018" />
                    <path d="M8 4v8M4 8h8" stroke="#fff" strokeWidth="2.4" />
                  </svg>
                  <div>
                    <Fit w={130}>Where can I find</Fit>
                    <br />
                    <Fit w={118}>this command?</Fit>
                  </div>
                </WhereBox>
                <CommandBox>
                  <Fit w={78}>Distance</Fit>
                  <br />
                  <Fit w={89}>command</Fit>
                </CommandBox>
                <Para>
                  <Fit w={163}>Reports the distance</Fit>
                  <br />
                  <Fit w={164}>between two points.</Fit>
                </Para>
                <Heading>
                  <Fit w={46}>Steps</Fit>
                </Heading>
                <Step>
                  <StepNo>1.</StepNo>
                  <div>
                    <Fit w={97}><Link>Pick</Link> the first</Fit>
                    <br />
                    <Fit w={45}>point.</Fit>
                  </div>
                </Step>
                <Step>
                  <StepNo>2.</StepNo>
                  <div>
                    <Fit w={61}>Pick the</Fit>
                    <br />
                    <Fit w={106}>second point.</Fit>
                  </div>
                </Step>
                <StepNote>
                  <Fit w={100}>The distance</Fit><br />
                  <Fit w={101}>between the</Fit><br />
                  <Fit w={117}>points displays</Fit><br />
                  <Fit w={45}>in the</Fit><br />
                  <Fit w={75}><Link>command</Link></Fit><br />
                  <Fit w={54}><Link>history</Link></Fit><br />
                  <Fit w={105}><Link>window</Link>, with</Fit><br />
                  <Fit w={87}>angles and</Fit><br />
                  <Fit w={93}>distances in</Fit><br />
                  <Fit w={62}>the axis</Fit><br />
                  <Fit w={95}>directions in</Fit><br />
                  <Fit w={79}><Link>world</Link> and</Fit><br />
                  <Fit w={96}><Link>construction</Link></Fit><br />
                  <Fit w={44}><Link>plane</Link></Fit><br />
                  <Fit w={98}>coordinates.</Fit>
                </StepNote>
                <Heading>
                  <Fit w={64}>Options</Fit>
                </Heading>
              </Doc>
              <VScroll>
                <Chevron dir={0} size={15} />
                <VThumb />
                <Chevron dir={180} size={15} />
              </VScroll>
              <HScroll>
                <Chevron dir={270} size={14} />
                <HThumb />
                <Chevron dir={90} size={14} />
              </HScroll>
            </Browser>
          </DockBody>
        </Dock>
      </Main>

      <StatusBar>
        {panes.map(([text, end, a, b], i) => {
          const start = i ? panes[i - 1][1] : 0;
          const layer = text === "Default";
          return (
            <Pane key={text} $w={end - start} $pad={a - start} $on={text === "Osnap" || text === "SmartTrack"}>
              {layer && <Swatch />}
              <Fit w={b - a - (layer ? 20 : 0)}>{text}</Fit>
            </Pane>
          );
        })}
      </StatusBar>
    </Window>
  );
}
